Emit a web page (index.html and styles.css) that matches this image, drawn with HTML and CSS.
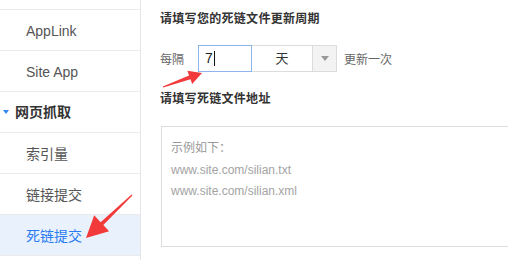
FILE: index.html
```html
<!DOCTYPE html>
<html lang="zh-CN">
<head>
<meta charset="utf-8">
<title>死链提交</title>
<link rel="stylesheet" href="styles.css">
</head>
<body>
<div class="page">
  <aside class="side">
    <div class="item stub"></div>
    <div class="item">AppLink</div>
    <div class="item">Site App</div>
    <div class="item group"><span class="tri"></span>网页抓取</div>
    <div class="item">索引量</div>
    <div class="item">链接提交</div>
    <div class="item active">死链提交</div>
    <div class="item"></div>
  </aside>
  <main class="main">
    <h3 class="title">请填写您的死链文件更新周期</h3>
    <div class="row">
      <span class="lbl">每隔</span>
      <div class="num">7<span class="caret"></span></div>
      <div class="sel"><span class="sel-val">天</span><span class="sel-btn"><i class="down"></i></span></div>
      <span class="after">更新一次</span>
    </div>
    <h3 class="title t2">请填写死链文件地址</h3>
    <div class="area">
      <div class="hint">示例如下：</div>
      <div class="url">www.site.com/silian.txt</div>
      <div class="url">www.site.com/silian.xml</div>
    </div>
  </main>
  <svg class="arrows" width="508" height="260" viewBox="0 0 508 260" aria-hidden="true">
    <polygon fill="#f23a3a" points="162.8,86.4 189.1,75.5 187.4,70.8 202,73 192.2,84 190.5,79.3 163.2,87.6"/>
    <polygon fill="#f23a3a" points="131.6,194.5 100.6,222.2 94.2,215.3 86,238 109.1,231.3 103.3,225.1 132.4,195.5"/>
  </svg>
</div>
</body>
</html>
```
FILE: styles.css
```css
html, body {
  margin: 0;
  padding: 0;
  background: #fff;
}
.page {
  position: relative;
  display: flex;
  width: 508px;
  height: 260px;
  overflow: hidden;
  font-family: "Liberation Sans", "Noto Sans CJK SC", sans-serif;
}
.side {
  width: 140px;
  flex: none;
  border-right: 1px solid #e6e6e6;
}
.item {
  height: 40px;
  line-height: 42px;
  border-bottom: 1px solid #ebebeb;
  padding-left: 26px;
  font-size: 14px;
  color: #555;
  white-space: nowrap;
}
.item.stub {
  height: 9px;
}
.item.group {
  padding-left: 3px;
  color: #333;
  font-weight: bold;
  display: flex;
  align-items: center;
}
.tri {
  width: 0;
  height: 0;
  border-left: 3px solid transparent;
  border-right: 3px solid transparent;
  border-top: 4px solid #3388ee;
  margin-right: 6px;
  margin-top: -1px;
}
.item.active {
  background: #e9f2fc;
  color: #2a7cf2;
}
.main {
  flex: 1;
  padding: 9px 0 0 19px;
}
.title {
  margin: 0;
  font-size: 12px;
  line-height: 20px;
  font-weight: bold;
  color: #333;
  letter-spacing: 0.3px;
}
.row {
  display: flex;
  align-items: center;
  height: 27px;
  margin-top: 16px;
  font-size: 12px;
  color: #666;
}
.lbl {
  margin-right: 14px;
}
.num {
  box-sizing: border-box;
  width: 54px;
  height: 27px;
  border: 1px solid #8db3ef;
  padding-left: 6px;
  font-size: 14px;
  line-height: 25px;
  color: #222;
  display: flex;
  align-items: center;
}
.caret {
  width: 1px;
  height: 15px;
  background: #111;
  margin-left: 1px;
}
.sel {
  display: flex;
  height: 27px;
  box-sizing: border-box;
  border: 1px solid #dcdcdc;
  border-left: none;
}
.sel-val {
  width: 60px;
  text-align: center;
  line-height: 25px;
  font-size: 13px;
  color: #333;
}
.sel-btn {
  width: 23px;
  background: #f3f3f3;
  border-left: 1px solid #dcdcdc;
  display: flex;
  align-items: center;
  justify-content: center;
}
.down {
  width: 0;
  height: 0;
  border-left: 4px solid transparent;
  border-right: 4px solid transparent;
  border-top: 5px solid #999;
}
.after {
  margin-left: 7px;
}
.t2 {
  margin-top: 17px;
}
.area {
  box-sizing: border-box;
  width: 400px;
  height: 121px;
  margin-top: 17px;
  margin-left: 1px;
  border: 1px solid #dddddd;
  padding: 11px 9px 10px;
  font-size: 12px;
  line-height: 21px;
}
.hint {
  color: #999;
  height: 21px;
  margin-bottom: 1px;
}
.url {
  color: #a3a3a3;
}
.arrows {
  position: absolute;
  left: 0;
  top: 0;
  pointer-events: none;
}
```
